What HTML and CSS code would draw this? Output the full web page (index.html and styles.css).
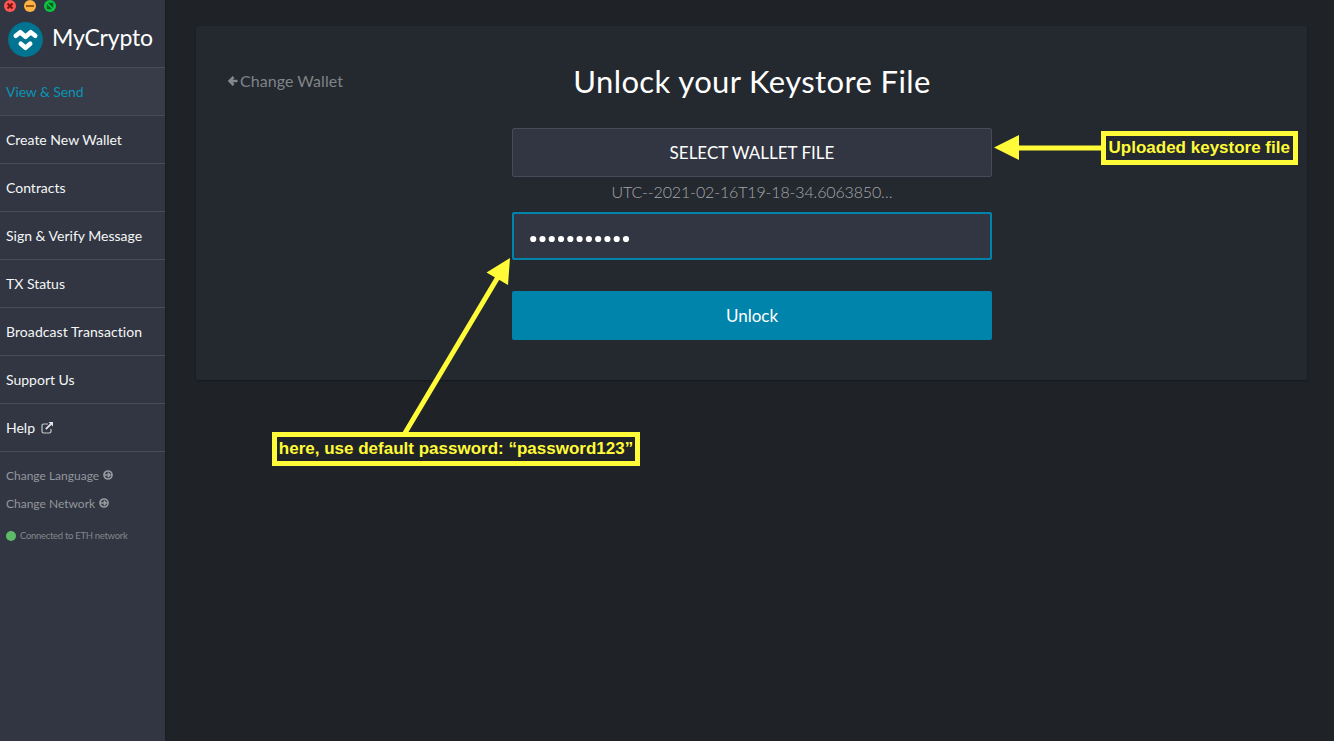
FILE: index.html
```html
<!DOCTYPE html>
<html lang="en">
<head>
<meta charset="utf-8">
<title>MyCrypto</title>
<link rel="stylesheet" href="styles.css">
</head>
<body>
<div class="app">
  <aside class="sidebar">
    <header class="brand">
      <svg class="window-controls" width="60" height="12" viewBox="0 0 60 12">
        <circle cx="10" cy="6" r="6" fill="#fc5753"/>
        <path d="M7.5 3.500l5 5M12.500 3.500l-5 5" stroke="#7c1210" stroke-width="2"/>
        <circle cx="30" cy="6" r="6" fill="#fdb244"/>
        <path d="M26 6h8" stroke="#985712" stroke-width="2"/>
        <circle cx="50" cy="6" r="6" fill="#0bc344"/>
        <path d="M48 2.800h5.200v5.200zM46.800 4v5.200h5.200z" fill="#0b5d20"/>
      </svg>
      <div class="logo">
        <svg width="35" height="35" viewBox="0 0 35 35">
          <circle cx="17.500" cy="17.500" r="17.400" fill="#007491"/>
          <path d="M7.800 13.800L12.300 10.200l5.200 4.600 5.200-4.600 4.500 3.600" fill="none" stroke="#fff" stroke-width="4.600" stroke-linecap="round" stroke-linejoin="round"/>
          <path d="M12.800 21.800l4.700 4 4.700-4" fill="none" stroke="#fff" stroke-width="4.600" stroke-linecap="round" stroke-linejoin="round"/>
        </svg>
        <span class="wordmark">MyCrypto</span>
      </div>
    </header>
    <nav class="nav">
      <a class="nav-item active">View &amp; Send</a>
      <a class="nav-item">Create New Wallet</a>
      <a class="nav-item">Contracts</a>
      <a class="nav-item">Sign &amp; Verify Message</a>
      <a class="nav-item">TX Status</a>
      <a class="nav-item wide">Broadcast Transaction</a>
      <a class="nav-item">Support Us</a>
      <a class="nav-item">Help
        <svg class="external" width="13" height="12" viewBox="0 0 13 12">
          <path d="M7 2H2.700Q1 2 1 3.700v5.600Q1 11 2.700 11h5.600Q10 11 10 9.300V7" fill="none" stroke="#c4c7cc" stroke-width="1.200"/>
          <path d="M4.800 7.200L10 2" stroke="#e2e4e8" stroke-width="1.800"/>
          <path d="M7.500 0h4.500v4.500z" fill="#e2e4e8"/>
        </svg>
      </a>
    </nav>
    <footer class="settings">
      <a class="setting">Change Language
        <svg class="arrow" width="10" height="10" viewBox="0 0 10 10"><circle cx="5" cy="5" r="4" fill="none" stroke="#989ba1" stroke-width="1.700"/><path d="M2 5H6.500M4.800 2.800L7 5 4.800 7.200" fill="none" stroke="#989ba1" stroke-width="1.600"/></svg>
      </a>
      <a class="setting">Change Network
        <svg class="arrow" width="10" height="10" viewBox="0 0 10 10"><circle cx="5" cy="5" r="4" fill="none" stroke="#989ba1" stroke-width="1.700"/><path d="M2 5H6.500M4.800 2.800L7 5 4.800 7.200" fill="none" stroke="#989ba1" stroke-width="1.600"/></svg>
      </a>
      <div class="status"><span class="dot"></span>Connected to ETH network</div>
    </footer>
  </aside>
  <main class="content">
    <section class="panel">
      <a class="back">
        <svg width="10" height="10" viewBox="0 0 10 10"><path d="M5.600 1L1.600 5l4 4M1.800 5H9.500" fill="none" stroke="#85888c" stroke-width="2.500"/></svg>
        <span>Change Wallet</span>
      </a>
      <form class="unlock">
        <h1 class="title">Unlock your Keystore File</h1>
        <div class="button file-button">SELECT WALLET FILE</div>
        <div class="filename">UTC--2021-02-16T19-18-34.6063850…</div>
        <div class="password">
          <svg width="110" height="8" viewBox="0 0 110 8" fill="#fff">
            <circle cx="4.200" cy="4" r="3.100"/><circle cx="13.480" cy="4" r="3.100"/><circle cx="22.760" cy="4" r="3.100"/><circle cx="32.040" cy="4" r="3.100"/><circle cx="41.320" cy="4" r="3.100"/><circle cx="50.600" cy="4" r="3.100"/><circle cx="59.880" cy="4" r="3.100"/><circle cx="69.160" cy="4" r="3.100"/><circle cx="78.440" cy="4" r="3.100"/><circle cx="87.720" cy="4" r="3.100"/><circle cx="97" cy="4" r="3.100"/>
          </svg>
        </div>
        <div class="button unlock-button">Unlock</div>
      </form>
    </section>
  </main>
</div>
<svg class="arrows" width="1334" height="741" viewBox="0 0 1334 741">
  <path d="M1016 148H1103M405 433L498 277" stroke="#fffb38" stroke-width="5"/>
  <path d="M994 147.500L1019 135v25zM510 258l-2 27-21.500-12.500z" fill="#fffb38"/>
</svg>
<div class="note note-file"><span>Uploaded keystore file</span></div>
<div class="note note-password"><span>here, use default password: “password123”</span></div>
</body>
</html>
```
FILE: styles.css
```css
* { box-sizing: border-box; }
body {
  margin: 0;
  background: #1f2226;
  color: #fff;
  font-family: Lato, sans-serif;
  overflow: hidden;
}
.app { display: flex; height: 741px; }
.sidebar {
  width: 165px;
  flex: none;
  background: #313642;
  box-shadow: 0 0 2px #15181b;
}
.brand { height: 67px; }
.window-controls { display: block; }
.logo { display: flex; align-items: center; gap: 9px; padding: 10px 0 0 8px; }
.logo svg { flex: none; }
.wordmark { font-size: 23px; line-height: 30px; margin-top: -6px; letter-spacing: -0.2px; }
.nav { border-bottom: 1px solid #454b57; }
.nav-item {
  display: flex;
  align-items: center;
  height: 48px;
  padding-left: 6px;
  border-top: 1px solid #454b57;
  font-size: 14px;
  white-space: nowrap;
  color: #f5f6f7;
}
.active { background: #373c48; color: #0b94b5; letter-spacing: -0.1px; }
.wide { letter-spacing: 0.07px; }
.external { margin-left: 6px; }
.settings { padding: 9px 0 0 6px; color: #94979d; }
.setting { display: flex; align-items: center; height: 28px; font-size: 12px; }
.arrow { margin-left: 3.5px; }
.status { display: flex; align-items: center; height: 28px; margin-top: 4px; font-size: 9.5px; letter-spacing: -0.3px; color: #83868d; }
.dot { width: 10px; height: 10px; margin: 1px 4px 0 0; border-radius: 50%; background: #5dbb68; }
.content { flex: 1; padding: 26px 27px 0 31px; }
.panel {
  display: grid;
  grid-template-columns: 316px 480px 1fr;
  height: 354px;
  border-radius: 2px;
  background: #24282f;
  box-shadow: 0 1px 2px #15181b;
}
.back { display: flex; align-items: center; gap: 3px; height: 20px; margin: 45px 0 0 32px; font-size: 16px; color: #808388; }
.back span { margin: -1px 0 0 -1px; letter-spacing: 0.05px; }
.title { height: 40px; margin: 35px 0 27px; text-align: center; font-size: 31px; line-height: 40px; font-weight: 400; letter-spacing: 0.38px; white-space: nowrap; }
.button { display: flex; align-items: center; justify-content: center; height: 49px; border-radius: 2px; font-size: 17px; }
.file-button { background: #313642; border: 1px solid #454b57; }
.filename { height: 35px; text-align: center; font-size: 16px; line-height: 29px; font-weight: 300; letter-spacing: -0.15px; color: #a5a7aa; }
.password { display: flex; align-items: center; height: 48px; padding: 5px 0 0 15px; border: 2px solid #0084ab; border-radius: 2px; background: #313642; }
.unlock-button { margin-top: 31px; background: #0084ab; }
.arrows { position: absolute; inset: 0; }
.note {
  position: absolute;
  display: flex;
  align-items: center;
  justify-content: center;
  height: 34px;
  border: 5px solid #fffb38;
  color: #fffb38;
  font: bold 17px "Liberation Sans", sans-serif;
  white-space: nowrap;
}
.note-file { left: 1101px; top: 130.500px; width: 196.500px; }
.note-password { left: 272px; top: 431.500px; width: 368px; }
```
